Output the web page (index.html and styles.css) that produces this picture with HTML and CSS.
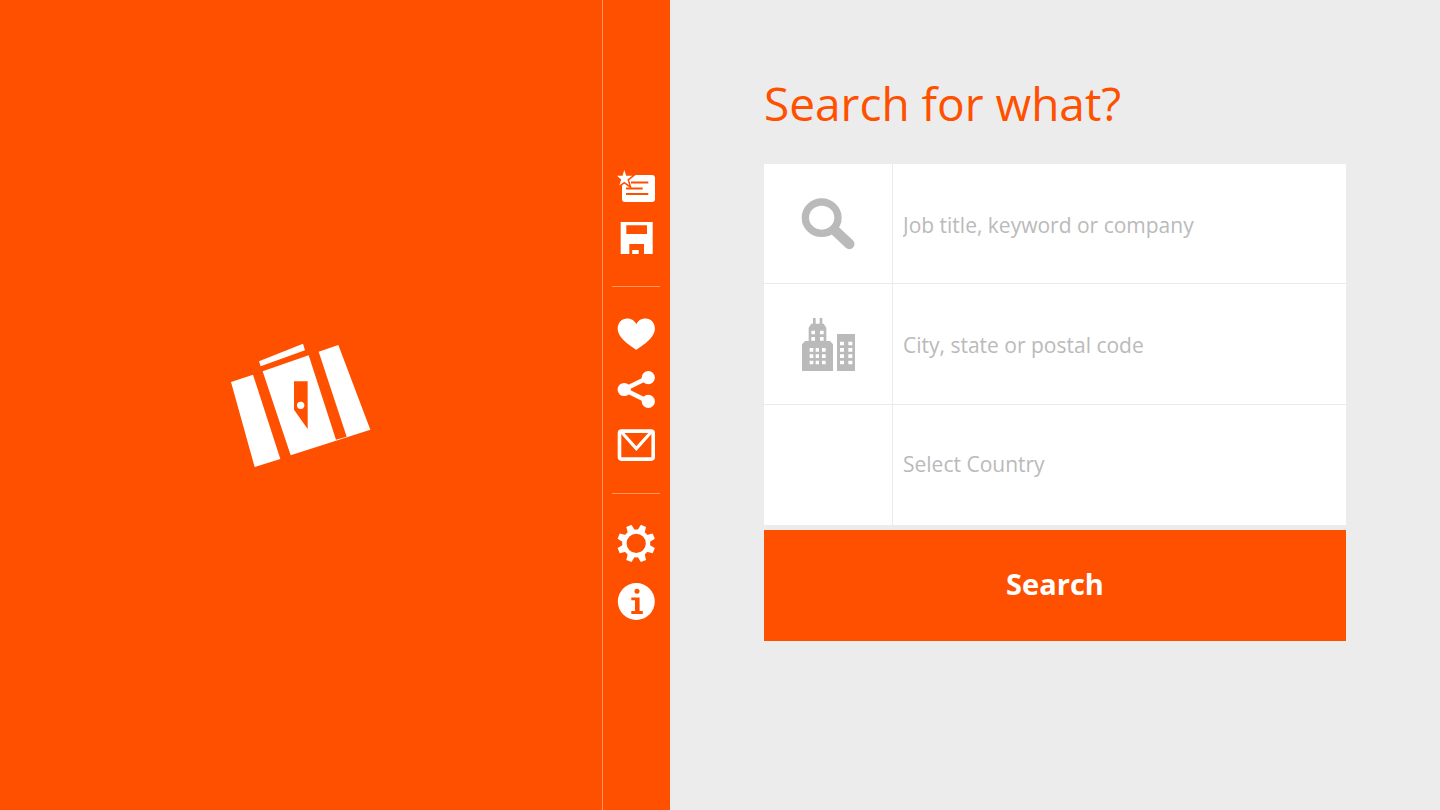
FILE: index.html
```html
<!DOCTYPE html>
<html lang="en">
<head>
  <meta charset="UTF-8">
  <meta name="viewport" content="width=device-width, initial-scale=1.0">
  <title>Job Search</title>
  <link rel="stylesheet" href="styles.css">
</head>
<body>
  <div class="app">
    <header class="brand">
      <svg class="logo" viewBox="36 39 420 372" fill="#fff" aria-label="Job Search">
        <path d="M36 156L102 134L184 387L107 411Z"/>
        <path d="M120 94L252 41L258 61L125 109Z"/>
        <path d="M131 124L269 76L351 329L383 320L299 65L358 45L454 299L215 376Z"/>
        <path fill="#ff5000" d="M225 154H266V297L225 239Z"/>
        <circle cx="245" cy="226" r="11"/>
      </svg>
    </header>

    <!-- Toolbar -->
    <nav class="toolbar">
      <div class="group">
        <button type="button" aria-label="Saved searches">
          <svg width="38" height="34" viewBox="0 0 38 34">
            <rect x="5" y="7" width="33" height="27" rx="3" fill="#fff"/>
            <path d="M14 14.5H31.3M9 20.5H25.7M9 26H31.3" stroke="#ff5000" stroke-width="2"/>
            <path d="M7.3 2L9.2 7.8H15.2L10.4 11.5L12.2 17.3L7.3 13.7L2.4 17.3L4.2 11.5L0 7.8H5.5Z" fill="#fff" stroke="#ff5000" stroke-width="3" paint-order="stroke"/>
          </svg>
        </button>
        <button type="button" aria-label="Save">
          <svg width="38" height="33" viewBox="0 0 38 33" fill="#fff">
            <path fill-rule="evenodd" d="M3.7 0H35.7V32H27V22H12.3V32H3.7ZM9.3 3.2V12H30V3.2Z"/>
            <path d="M15.2 28H21.7V32H15.2Z"/>
          </svg>
        </button>
      </div>
      <div class="group">
        <button type="button" aria-label="Favorites">
          <svg width="38" height="33" viewBox="0 0 38 33" fill="#fff">
            <path d="M19.3 31.8C13 27.5 0.7 20 0.7 10.5C0.7 4.5 5 0.4 10.2 0.4C14.6 0.4 17.8 2.8 19.3 6.2C20.8 2.8 24 0.4 28.4 0.4C33.6 0.4 37.9 4.5 37.9 10.5C37.9 20 25.6 27.5 19.3 31.8Z"/>
          </svg>
        </button>
        <button type="button" aria-label="Share">
          <svg width="38" height="38" viewBox="0 0 38 38" fill="#fff">
            <path d="M31.3 6.5L7 18.5L31.3 30.5" fill="none" stroke="#fff" stroke-width="4.6"/>
            <circle cx="31.3" cy="6.6" r="6.6"/>
            <circle cx="7.2" cy="18.5" r="6.6"/>
            <circle cx="31.3" cy="30.4" r="6.6"/>
          </svg>
        </button>
        <button type="button" aria-label="Mail">
          <svg width="38" height="33" viewBox="0 0 38 33" fill="none" stroke="#fff" stroke-width="3.6">
            <rect x="2.5" y="2.1" width="33.7" height="28" rx="2"/>
            <path d="M4 2.5L19.3 19.5L34.7 2.5" stroke-width="3.2"/>
          </svg>
        </button>
      </div>
      <div class="group">
        <button type="button" aria-label="Settings">
          <svg width="38" height="38" viewBox="0 0 38 38" fill="#fff">
            <circle cx="19.2" cy="18.4" r="11.8" fill="none" stroke="#fff" stroke-width="4.4"/>
            <g transform="translate(19.2 18.4) rotate(22.5)">
              <path id="tooth" d="M-3.9 -12L-2.8 -19H2.8L3.9 -12Z"/>
              <use href="#tooth" transform="rotate(45)"/>
              <use href="#tooth" transform="rotate(90)"/>
              <use href="#tooth" transform="rotate(135)"/>
              <use href="#tooth" transform="rotate(180)"/>
              <use href="#tooth" transform="rotate(225)"/>
              <use href="#tooth" transform="rotate(270)"/>
              <use href="#tooth" transform="rotate(315)"/>
            </g>
          </svg>
        </button>
        <button type="button" aria-label="About">
          <svg width="38" height="38" viewBox="0 0 38 38" fill="#ff5000">
            <circle cx="19.3" cy="18.5" r="18.5" fill="#fff"/>
            <circle cx="20" cy="8.3" r="2.5"/>
            <path d="M14.3 14.4H22.6V28H25.8V31H14.3V28H18V17.2H14.3Z"/>
          </svg>
        </button>
      </div>
    </nav>

    <main class="content">
      <h1>Search for what?</h1>
      <form class="search-form">
        <div class="field">
          <label for="keyword" aria-label="Keyword">
            <svg width="54" height="52" viewBox="36 38 160 156" fill="none" stroke="#bababa">
              <ellipse cx="97" cy="97" rx="49" ry="47" stroke-width="22"/>
              <path d="M136 135L180 176" stroke-width="31" stroke-linecap="round"/>
            </svg>
          </label>
          <input type="text" id="keyword" placeholder="Job title, keyword or company">
        </div>
        <div class="field">
          <label for="place" aria-label="Location">
            <svg width="53" height="53" viewBox="36 39 159 159" fill="#bababa">
              <path fill-rule="evenodd" d="M69 39H77V56H89V39H97V56H101L109 68V108H120L129 118V198H36V118L46 108H56V68L64 56H69ZM64 77V88H75V77ZM90 77V88H101V77ZM64 96V107H75V96ZM90 96V107H101V96ZM59 129V140H70V129ZM77 129V140H87V129ZM96 129V140H107V129ZM59 148V159H70V148ZM77 148V159H87V148ZM96 148V159H107V148ZM59 167V178H70V167ZM77 167V178H87V167ZM96 167V178H107V167Z"/>
              <path fill-rule="evenodd" d="M141 87H195V198H141ZM150 110V121H162V110ZM175 110V121H187V110ZM150 129V140H162V129ZM175 129V140H187V129ZM150 148V159H162V148ZM175 148V159H187V148ZM150 167V178H162V167ZM175 167V178H187V167Z"/>
            </svg>
          </label>
          <input type="text" id="place" placeholder="City, state or postal code">
        </div>
        <div class="field">
          <label for="country" aria-label="Country"></label>
          <select id="country">
            <option>Select Country</option>
          </select>
        </div>
        <button type="submit" class="search-button">Search</button>
      </form>
    </main>
  </div>
</body>
</html>
```
FILE: styles.css
```css
* {
  box-sizing: border-box;
}
body {
  margin: 0;
  font-family: "Open Sans", "Noto Sans", sans-serif;
  background-color: #ececec;
}
.app {
  display: grid;
  grid-template-columns: minmax(0, 603fr) 67px minmax(0, 770fr);
  min-height: 100vh;
}
.brand {
  display: flex;
  align-items: center;
  justify-content: center;
  background-color: #ff5000;
  border-right: 1px solid #ff9664;
}
.logo {
  width: 140px;
}
.toolbar {
  padding: 168px 10px 0 9px;
  background-color: #ff5000;
}
.group {
  display: flex;
  flex-direction: column;
  align-items: center;
  gap: 20px;
}
.group + .group {
  margin-top: 31px;
  padding-top: 31px;
  border-top: 1px solid #ff9664;
}
.group button {
  padding: 0;
  border: none;
  background: none;
  cursor: pointer;
}
.group svg {
  display: block;
}
.content {
  padding: 70px 94px;
}
h1 {
  margin: 0 0 28px;
  font-size: 46px;
  line-height: 66px;
  font-weight: 400;
  color: #ff5000;
  white-space: nowrap;
}
.field {
  display: flex;
  height: 119px;
  background-color: #fff;
}
.field + .field {
  height: 121px;
  border-top: 1px solid #ebebeb;
}
.field label {
  display: flex;
  align-items: center;
  justify-content: center;
  width: 129px;
  border-right: 1px solid #ebebeb;
}
.field input, .field select {
  flex: 1;
  min-width: 0;
  padding: 2px 10px 0;
  border: none;
  outline: none;
  appearance: none;
  background: none;
  font-family: inherit;
  font-size: 21px;
  color: #bababa;
}
.field select {
  padding: 0 10px 2px;
}
.field input::placeholder {
  color: #bababa;
}
.search-button {
  display: block;
  width: 100%;
  height: 111px;
  margin-top: 5px;
  padding: 0 0 4px;
  border: none;
  background-color: #ff5000;
  color: #fff;
  font-family: inherit;
  font-size: 29px;
  font-weight: 700;
  cursor: pointer;
}
```
